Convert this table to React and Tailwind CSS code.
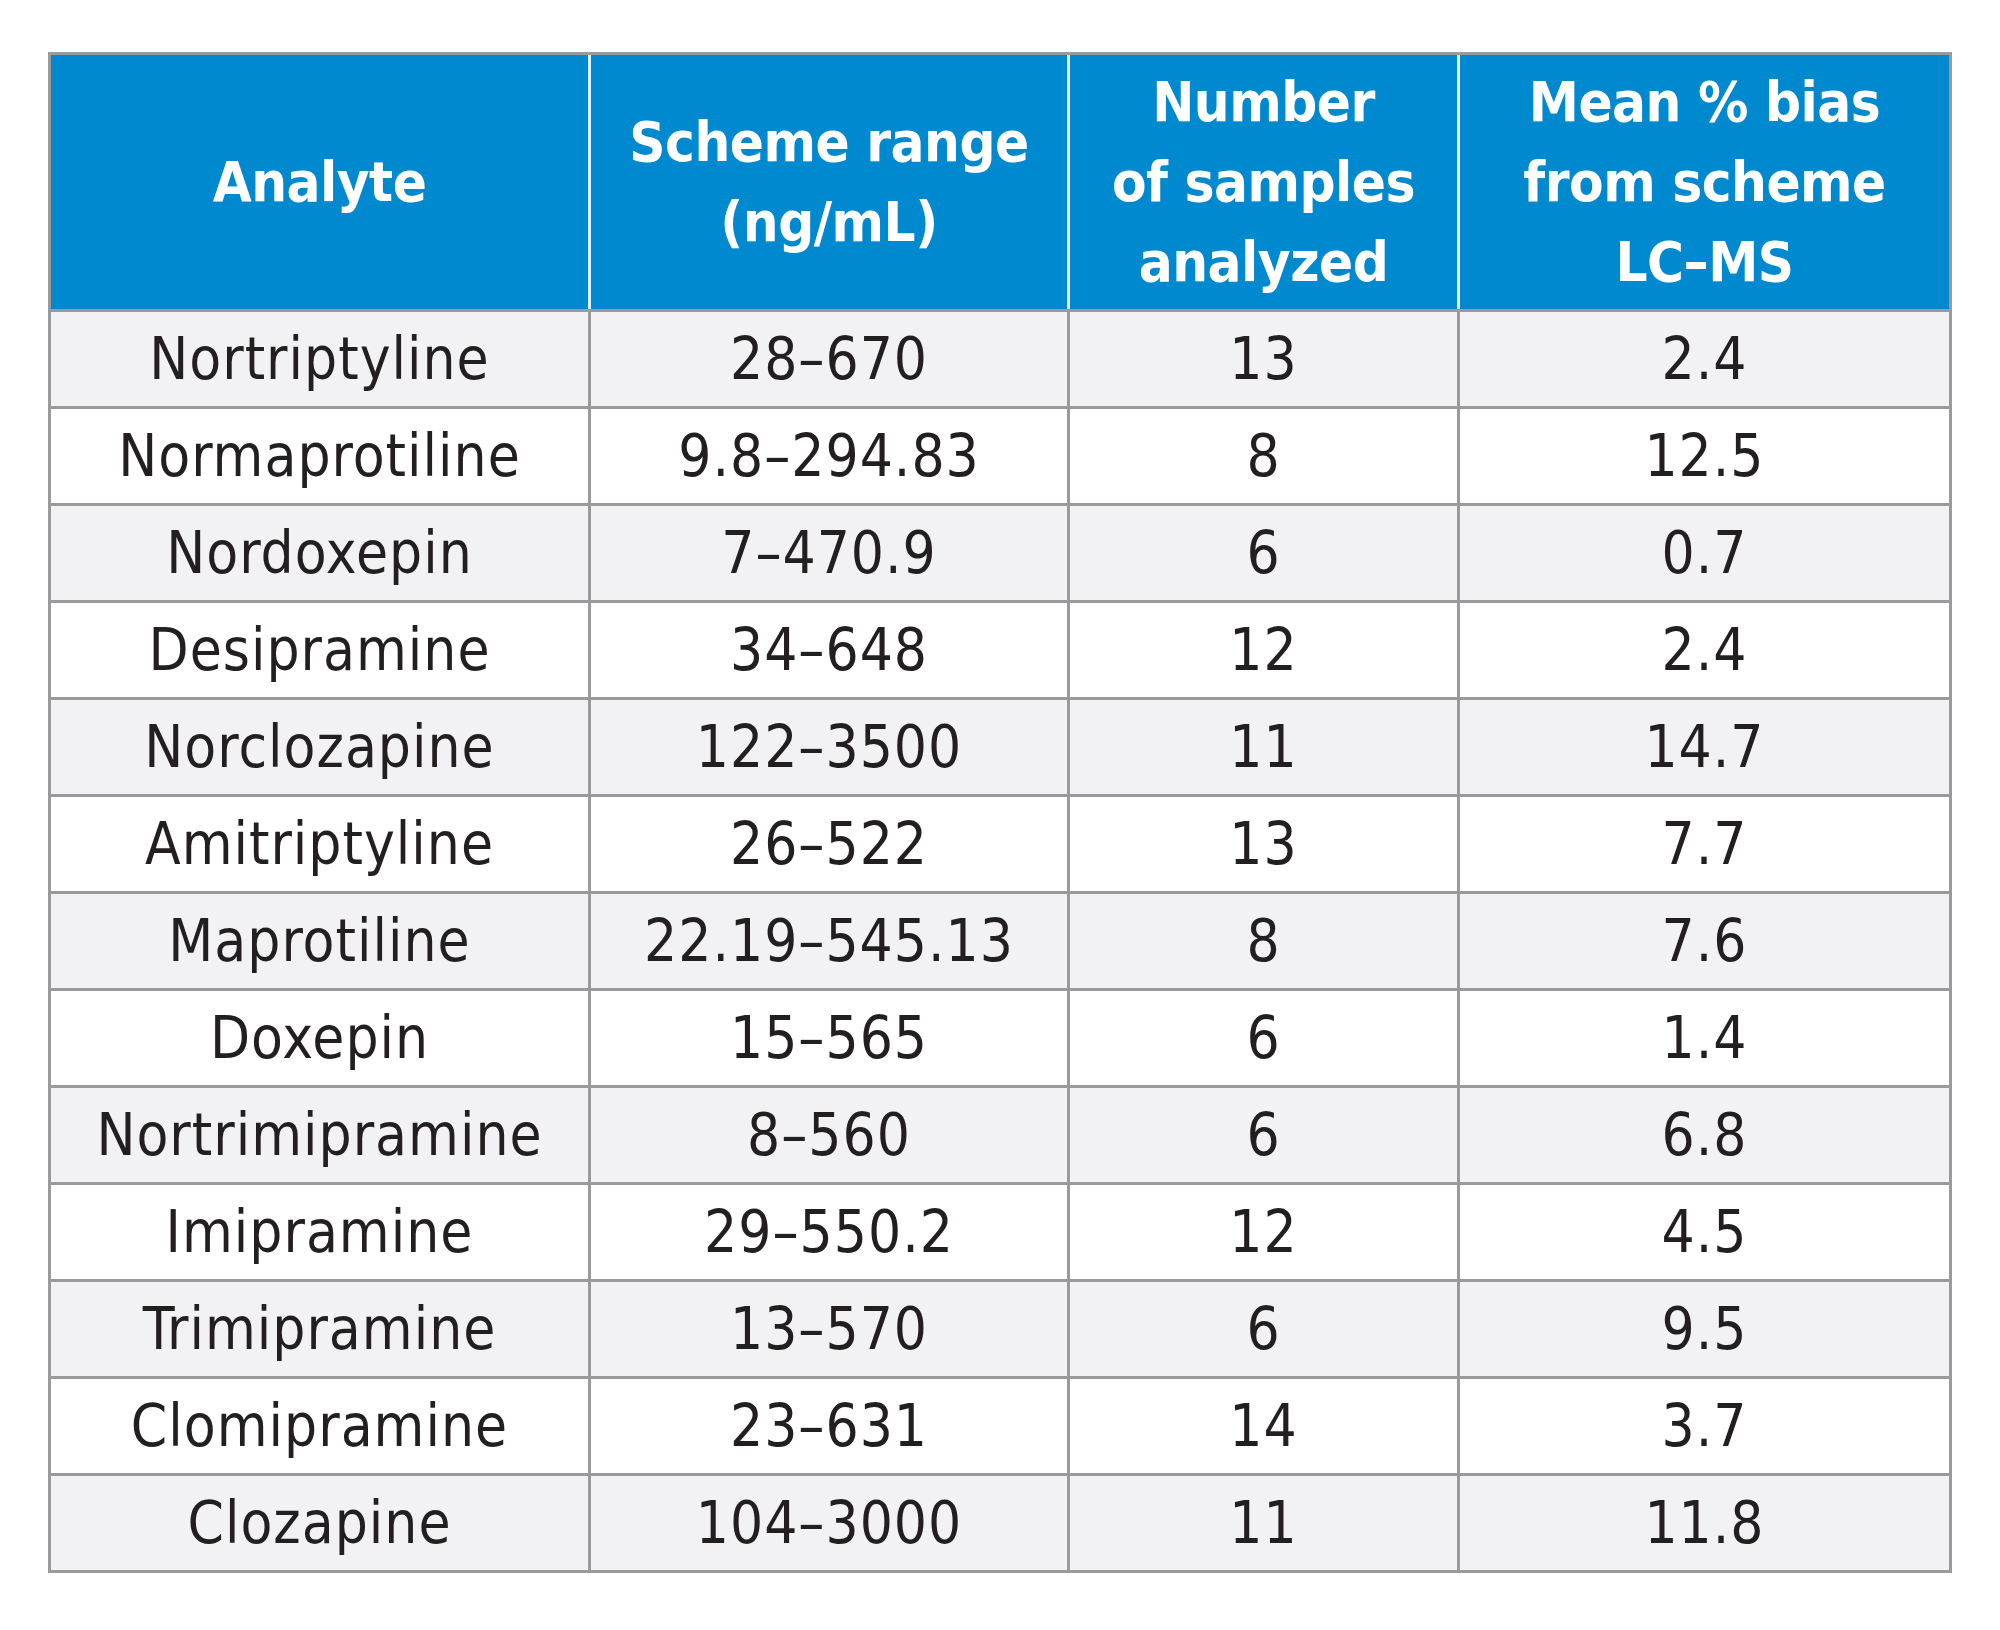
const rows = [
  ["Nortriptyline", "28–670", "13", "2.4"],
  ["Normaprotiline", "9.8–294.83", "8", "12.5"],
  ["Nordoxepin", "7–470.9", "6", "0.7"],
  ["Desipramine", "34–648", "12", "2.4"],
  ["Norclozapine", "122–3500", "11", "14.7"],
  ["Amitriptyline", "26–522", "13", "7.7"],
  ["Maprotiline", "22.19–545.13", "8", "7.6"],
  ["Doxepin", "15–565", "6", "1.4"],
  ["Nortrimipramine", "8–560", "6", "6.8"],
  ["Imipramine", "29–550.2", "12", "4.5"],
  ["Trimipramine", "13–570", "6", "9.5"],
  ["Clomipramine", "23–631", "14", "3.7"],
  ["Clozapine", "104–3000", "11", "11.8"],
]

const headers = [
  ["Analyte"],
  ["Scheme range", "(ng/mL)"],
  ["Number", "of samples", "analyzed"],
  ["Mean % bias", "from scheme", "LC–MS"],
]

function App() {
  return (
    <div className="w-[2000px] h-[1630px] bg-white pt-[52px] pl-[48px] font-['DejaVu_Sans_Condensed','Liberation_Sans',sans-serif]">
      <div className="w-[1904px] border-[3px] border-[#9a9a9c]">
        {/* header */}
        <div className="grid grid-cols-[537px_479px_390px_1fr] h-[254px] bg-[#0089cf]">
          {headers.map((h, i) => (
            <div
              key={i}
              className={`flex flex-col items-center justify-center text-white font-bold text-[56px] leading-[80px] tracking-[-0.5px] whitespace-nowrap ${i > 0 ? 'border-l-[3px] border-[#e4f3fb]' : ''}`}
            >
              {h.map((line) => (
                <span key={line}>{line}</span>
              ))}
            </div>
          ))}
        </div>
        {/* body */}
        {rows.map((r, ri) => (
          <div
            key={r[0]}
            className={`grid grid-cols-[537px_479px_390px_1fr] h-[97px] border-t-[3px] border-[#9a9a9c] ${ri % 2 === 0 ? 'bg-[#f2f2f4]' : 'bg-white'}`}
          >
            {r.map((c, ci) => (
              <div
                key={ci}
                className={`flex items-center justify-center text-[#231f20] text-[58px] tracking-[1px] whitespace-nowrap ${ci > 0 ? 'border-l-[3px] border-[#9a9a9c]' : ''}`}
              >
                {c}
              </div>
            ))}
          </div>
        ))}
      </div>
    </div>
  )
}

export default App
